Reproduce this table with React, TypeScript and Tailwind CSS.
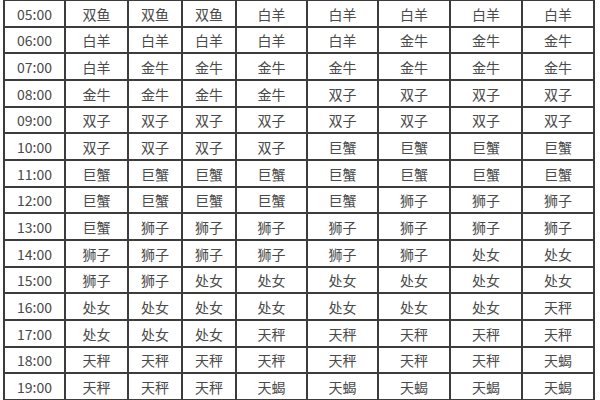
const cols = [61, 63, 54, 54, 71, 71, 72, 72, 72]

const rows: [string, string[]][] = [
  ["05:00", ["双鱼", "双鱼", "双鱼", "白羊", "白羊", "白羊", "白羊", "白羊"]],
  ["06:00", ["白羊", "白羊", "白羊", "白羊", "白羊", "金牛", "金牛", "金牛"]],
  ["07:00", ["白羊", "金牛", "金牛", "金牛", "金牛", "金牛", "金牛", "金牛"]],
  ["08:00", ["金牛", "金牛", "金牛", "金牛", "双子", "双子", "双子", "双子"]],
  ["09:00", ["双子", "双子", "双子", "双子", "双子", "双子", "双子", "双子"]],
  ["10:00", ["双子", "双子", "双子", "双子", "巨蟹", "巨蟹", "巨蟹", "巨蟹"]],
  ["11:00", ["巨蟹", "巨蟹", "巨蟹", "巨蟹", "巨蟹", "巨蟹", "巨蟹", "巨蟹"]],
  ["12:00", ["巨蟹", "巨蟹", "巨蟹", "巨蟹", "巨蟹", "狮子", "狮子", "狮子"]],
  ["13:00", ["巨蟹", "狮子", "狮子", "狮子", "狮子", "狮子", "狮子", "狮子"]],
  ["14:00", ["狮子", "狮子", "狮子", "狮子", "狮子", "狮子", "处女", "处女"]],
  ["15:00", ["狮子", "狮子", "处女", "处女", "处女", "处女", "处女", "处女"]],
  ["16:00", ["处女", "处女", "处女", "处女", "处女", "处女", "处女", "天秤"]],
  ["17:00", ["处女", "处女", "处女", "天秤", "天秤", "天秤", "天秤", "天秤"]],
  ["18:00", ["天秤", "天秤", "天秤", "天秤", "天秤", "天秤", "天秤", "天蝎"]],
  ["19:00", ["天秤", "天秤", "天秤", "天蝎", "天蝎", "天蝎", "天蝎", "天蝎"]],
]

export default function App() {
  return (
    <div
      className="w-[600px] h-[400px] overflow-hidden bg-white pl-[3px]"
      style={{ fontFamily: '"Noto Sans CJK SC", "Noto Sans", sans-serif' }}
    >
      <table className="border-collapse table-fixed w-[592px] -mt-px text-[14px] text-[#4a4a4a]">
        <colgroup>
          {cols.map((w, i) => (
            <col key={i} style={{ width: w }} />
          ))}
        </colgroup>
        <tbody>
          {rows.map(([time, signs], r) => (
            <tr key={time} className={r % 3 === 1 ? "h-[26px]" : "h-[27px]"}>
              <td className="border-2 border-[#3c3c3c] text-center p-0 leading-none">{time}</td>
              {signs.map((s, i) => (
                <td key={i} className="border-2 border-[#3c3c3c] text-center p-0 leading-none">
                  {s}
                </td>
              ))}
            </tr>
          ))}
        </tbody>
      </table>
    </div>
  )
}
